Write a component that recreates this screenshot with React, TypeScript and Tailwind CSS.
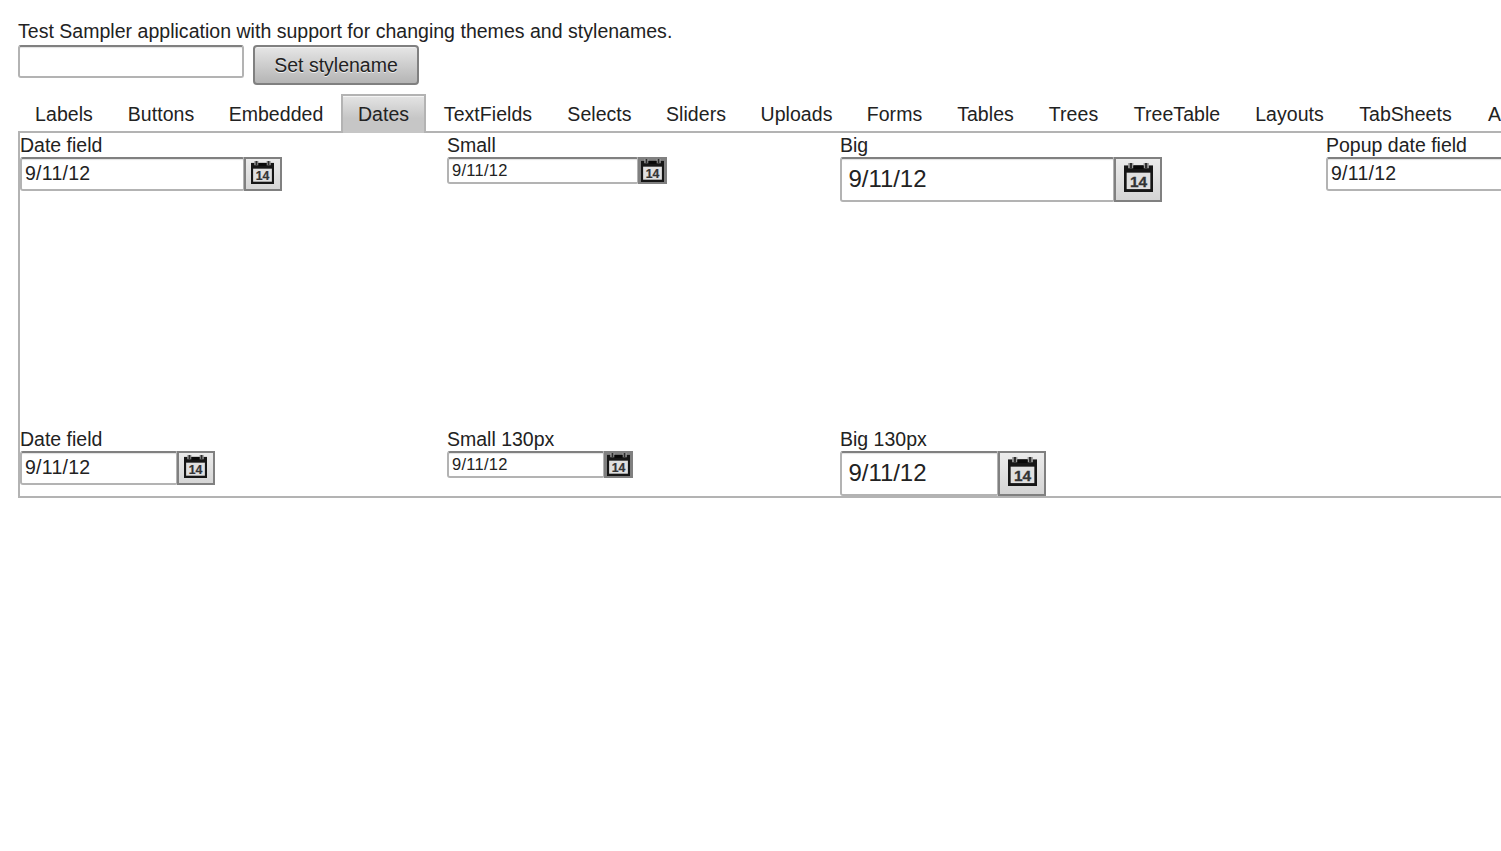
const tabs = [
  { name: "Labels", w: "w-[93px]" },
  { name: "Buttons", w: "w-[101px]" },
  { name: "Embedded", w: "w-[129px]" },
  { name: "Dates", w: "w-[85px]" },
  { name: "TextFields", w: "w-[125px]" },
  { name: "Selects", w: "w-[98px]" },
  { name: "Sliders", w: "w-[95px]" },
  { name: "Uploads", w: "w-[106px]" },
  { name: "Forms", w: "w-[90px]" },
  { name: "Tables", w: "w-[92px]" },
  { name: "Trees", w: "w-[84px]" },
  { name: "TreeTable", w: "w-[123px]" },
  { name: "Layouts", w: "w-[102px]" },
  { name: "TabSheets", w: "w-[130px]" },
  { name: "Accordions", w: "w-[132px]" },
];

function CalendarIcon({ className }: { className: string }) {
  return (
    <svg viewBox="0 0 24 24" className={className} aria-hidden="true">
      <path d="M0 2H24V24H0Z" fill="#161616" />
      <path d="M2.2 8H21.8V21.6H2.2Z" fill="#e0e0e0" />
      <path d="M3.4 0H7.8V4.4H3.4ZM16.2 0H20.6V4.4H16.2Z" fill="#9c9c9c" />
      <path d="M4.8 0H6.6V4.2H4.8ZM17.4 0H19.2V4.2H17.4Z" fill="#2c2c2c" />
      <path d="M7.8 2H16.2V5H7.8Z" fill="#080808" />
      <text x="12" y="19.6" textAnchor="middle" fontSize="12.8" fontWeight="700" fontFamily="Liberation Sans, sans-serif" fill="#333" stroke="#333" strokeWidth="0.25">
        14
      </text>
    </svg>
  );
}

type Size = "small" | "normal" | "big";

const styles: Record<Size, { input: string; button: string; icon: string }> = {
  small: { input: "h-[27px] pl-[3px] pb-px text-[16.5px] tracking-[0.25px]", button: "h-[27px] w-[29px] pb-px bg-[#808080]", icon: "h-[23px] w-[23px]" },
  normal: { input: "h-[34px] pl-[3px] pb-[2px] text-[19.5px] tracking-[0.25px]", button: "h-[34px] w-[38px] pr-px pb-[3px] bg-linear-to-b from-[#ebebeb] to-[#d6d6d6]", icon: "h-[23px] w-[23px]" },
  big: { input: "h-[45px] pl-[6.5px] pb-px text-[24px] tracking-[-0.05px]", button: "h-[45px] w-12 pb-[4px] bg-linear-to-b from-[#ebebeb] to-[#d4d4d4]", icon: "h-[29px] w-[29px]" },
};

function DateField({ label, size, width }: { label: string; size: Size; width: string }) {
  const s = styles[size];
  return (
    <div>
      <div className="h-6 leading-6">{label}</div>
      <div className="flex">
        <input
          defaultValue="9/11/12"
          className={`${s.input} ${width} shrink-0 rounded-[3px] border-2 border-[#b3b3b3] border-t-[#808080] bg-white shadow-[inset_0_2px_1px_-1px_#e2e2e2] outline-none`}
        />
        <button className={`${s.button} -ml-px flex shrink-0 items-center justify-center border-2 border-[#808080]`}>
          <CalendarIcon className={`${s.icon} shrink-0`} />
        </button>
      </div>
    </div>
  );
}

export default function App() {
  return (
    <div className="h-[851px] w-[1501px] overflow-hidden bg-white pl-[18px] pt-[19px] font-['Liberation_Sans',Arial,sans-serif] text-[19.5px] text-[#222]">
      <div className="h-[26px] leading-6 tracking-[0.025px]">Test Sampler application with support for changing themes and stylenames.</div>
      <div className="flex h-[49px] items-start gap-[9px]">
        <input className="h-[33px] w-[226px] rounded-[3px] border-2 border-[#b3b3b3] border-t-[#808080] shadow-[inset_0_2px_1px_-1px_#e2e2e2] outline-none" />
        <button className="h-10 w-[166px] rounded-[4px] border-2 border-[#808080] bg-linear-to-b from-[#e6e6e6] to-[#b5b5b5] text-center leading-9 shadow-[inset_0_1px_0_#f0f0f0] [text-shadow:0_1px_0_#eee]">
          Set stylename
        </button>
      </div>
      <div className="flex h-[37px] w-max tracking-[0.05px]">
        {tabs.map((t) => (
          <div
            key={t.name}
            className={`${t.w} shrink-0 text-center ${
              t.name === "Dates" ? "relative h-[39px] border-2 border-b-0 border-[#b3b3b3] bg-linear-to-b from-[#e4e4e4] to-[#c6c6c6] to-60% leading-[36px] shadow-[inset_0_1px_0_#f4f4f4]" : "pr-px leading-[40px]"
            }`}
          >
            {t.name}
          </div>
        ))}
      </div>
      <div className="grid h-[367px] w-[1800px] grid-cols-[427px_393px_486px_400px] grid-rows-[294px_69px] border-2 border-[#b3b3b3]">
        <DateField label="Date field" size="normal" width="w-[225px]" />
        <DateField label="Small" size="small" width="w-[192px]" />
        <DateField label="Big" size="big" width="w-[275px]" />
        <DateField label="Popup date field" size="normal" width="w-[225px]" />
        <DateField label="Date field" size="normal" width="w-[158px]" />
        <DateField label="Small 130px" size="small" width="w-[158px]" />
        <DateField label="Big 130px" size="big" width="w-[159px]" />
      </div>
    </div>
  );
}
